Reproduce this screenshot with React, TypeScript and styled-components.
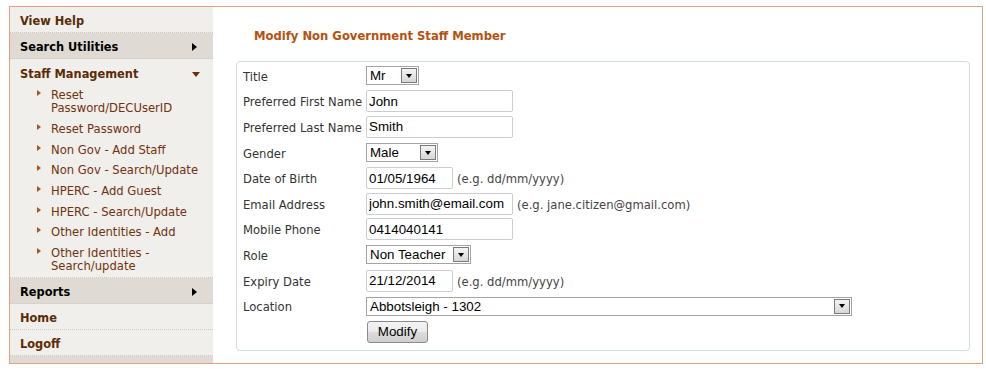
import React from 'react';
import styled, { createGlobalStyle } from 'styled-components';

const GlobalStyle = createGlobalStyle`
  html, body { margin: 0; padding: 0; background: #ffffff; }
  body { font-family: "DejaVu Sans", Verdana, sans-serif; }
  #root { display: block; }
`;

const Frame = styled.div`
  box-sizing: border-box;
  margin: 6px 0 0 9px;
  width: 974px;
  height: 358px;
  border: 1px solid #e0a27e;
  display: flex;
`;

const Sidebar = styled.nav`
  width: 203px;
  flex: none;
  background: #f1efeb;
  display: flex;
  flex-direction: column;
`;

const NavHeader = styled.div<{ $active?: boolean; $dark?: boolean; $open?: boolean }>`
  box-sizing: border-box;
  height: ${(p) => (p.$open ? '27px' : '26px')};
  flex: none;
  display: flex;
  align-items: center;
  justify-content: space-between;
  padding: 2px 0 0 10px;
  font-weight: bold;
  font-size: 11.4px;
  color: ${(p) => (p.$dark ? '#000000' : '#5a2c07')};
  background: ${(p) => (p.$active ? '#dfdbd4' : 'transparent')};
  border-bottom: ${(p) => (p.$open ? 'none' : '1px dotted #cdc8c0')};
`;

const RightArrow = styled.span`
  width: 0;
  height: 0;
  border-top: 4.5px solid transparent;
  border-bottom: 4.5px solid transparent;
  border-left: 5px solid #000000;
  margin-right: 16px;
`;

const DownArrow = styled.span`
  width: 0;
  height: 0;
  border-left: 4px solid transparent;
  border-right: 4px solid transparent;
  border-top: 5px solid #6e2d08;
  margin-right: 13px;
  margin-top: 1px;
`;

const NavList = styled.ul`
  list-style: none;
  margin: 0;
  padding: 0;
  height: 191px;
  overflow: hidden;
  flex: none;
  border-bottom: 1px dotted #cdc8c0;
`;

const NavItem = styled.li`
  display: flex;
  align-items: flex-start;
  padding: 3.3px 8px 4.4px 27px;
  font-size: 11.6px;
  line-height: 13px;
  color: #70320f;

  &::before {
    content: '';
    flex: none;
    width: 0;
    height: 0;
    margin: 1px 10px 0 0;
    border-top: 3.5px solid transparent;
    border-bottom: 3.5px solid transparent;
    border-left: 4px solid #a9561b;
  }
`;

const Filler = styled.div`
  flex: 1;
  background: #dfdbd4;
`;

const Main = styled.main`
  flex: 1;
  padding: 21px 12px 0 23px;
  background: #ffffff;
`;

const Title = styled.h1`
  margin: 0 0 17px 0;
  padding-left: 18px;
  font-size: 11.6px;
  line-height: 16px;
  font-weight: bold;
  color: #b5510f;
`;

const Panel = styled.div`
  border: 1px solid #d3dbe3;
  border-radius: 4px;
  padding: 1px 6px 5px 6px;
  display: grid;
  grid-template-columns: 123px 1fr;
  grid-auto-rows: 25.6px;
  align-items: center;
`;

const Label = styled.div`
  font-size: 11.6px;
  padding-top: 2px;
  color: #333333;
`;

const Field = styled.div`
  display: flex;
  align-items: center;
  gap: 4px;
`;

const TextInput = styled.input<{ $w: number }>`
  box-sizing: border-box;
  width: ${(p) => p.$w}px;
  height: 22px;
  margin: 0;
  padding: 0 2px;
  border: 1px solid #c9ced4;
  border-radius: 2px;
  font-family: "Liberation Sans", Arial, sans-serif;
  font-size: 13.33px;
  color: #000000;
  background: #ffffff;
  outline: none;
`;

const SelectBox = styled.div<{ $w: number }>`
  box-sizing: border-box;
  width: ${(p) => p.$w}px;
  height: 19px;
  border: 1px solid #a3a3a3;
  background: #ffffff;
  display: flex;
  align-items: center;
  justify-content: space-between;
  padding: 0 1px 0 3px;
  font-family: "Liberation Sans", Arial, sans-serif;
  font-size: 13.33px;
  color: #000000;
  white-space: nowrap;
`;

const DropButton = styled.span`
  box-sizing: border-box;
  flex: none;
  width: 16px;
  height: 15px;
  border: 1px solid #7a7a7a;
  background: linear-gradient(#f4f4f4, #e6e6e6 50%, #d6d6d6);
  display: flex;
  align-items: center;
  justify-content: center;

  &::after {
    content: '';
    width: 0;
    height: 0;
    border-left: 3.5px solid transparent;
    border-right: 3.5px solid transparent;
    border-top: 4px solid #000000;
  }
`;

const Hint = styled.span`
  font-size: 11.6px;
  padding-top: 2px;
  color: #444444;
`;

const Button = styled.button`
  box-sizing: border-box;
  margin: 0 0 0 1px;
  width: 61px;
  height: 22px;
  padding: 0;
  border: 1px solid #8a8a8a;
  border-radius: 3px;
  background: linear-gradient(#f3f3f3, #ebebeb 48%, #dcdcdc 52%, #cfcfcf);
  font-family: "Liberation Sans", Arial, sans-serif;
  font-size: 13.33px;
  color: #000000;
`;

const Select = ({ w, value }: { w: number; value: string }) => (
  <SelectBox $w={w}>
    <span>{value}</span>
    <DropButton />
  </SelectBox>
);

const subItems = [
  'Reset Password/DECUserID',
  'Reset Password',
  'Non Gov - Add Staff',
  'Non Gov - Search/Update',
  'HPERC - Add Guest',
  'HPERC - Search/Update',
  'Other Identities - Add',
  'Other Identities - Search/update',
];

export default function App() {
  return (
    <>
      <GlobalStyle />
      <Frame>
        <Sidebar>
          <NavHeader>View Help</NavHeader>
          <NavHeader $active $dark>
            Search Utilities
            <RightArrow />
          </NavHeader>
          <NavHeader $open>
            Staff Management
            <DownArrow />
          </NavHeader>
          <NavList>
            {subItems.map((s) => (
              <NavItem key={s}>
                <span>{s}</span>
              </NavItem>
            ))}
          </NavList>
          <NavHeader $active $dark>
            Reports
            <RightArrow />
          </NavHeader>
          <NavHeader>Home</NavHeader>
          <NavHeader>Logoff</NavHeader>
          <Filler />
        </Sidebar>
        <Main>
          <Title>Modify Non Government Staff Member</Title>
          <Panel>
            <Label>Title</Label>
            <Field>
              <Select w={53} value="Mr" />
            </Field>
            <Label>Preferred First Name</Label>
            <Field>
              <TextInput $w={147} defaultValue="John" />
            </Field>
            <Label>Preferred Last Name</Label>
            <Field>
              <TextInput $w={147} defaultValue="Smith" />
            </Field>
            <Label>Gender</Label>
            <Field>
              <Select w={72} value="Male" />
            </Field>
            <Label>Date of Birth</Label>
            <Field>
              <TextInput $w={87} defaultValue="01/05/1964" />
              <Hint>(e.g. dd/mm/yyyy)</Hint>
            </Field>
            <Label>Email Address</Label>
            <Field>
              <TextInput $w={147} defaultValue="john.smith@email.com" />
              <Hint>(e.g. jane.citizen@gmail.com)</Hint>
            </Field>
            <Label>Mobile Phone</Label>
            <Field>
              <TextInput $w={147} defaultValue="0414040141" />
            </Field>
            <Label>Role</Label>
            <Field>
              <Select w={105} value="Non Teacher" />
            </Field>
            <Label>Expiry Date</Label>
            <Field>
              <TextInput $w={87} defaultValue="21/12/2014" />
              <Hint>(e.g. dd/mm/yyyy)</Hint>
            </Field>
            <Label>Location</Label>
            <Field>
              <Select w={486} value="Abbotsleigh - 1302" />
            </Field>
            <div />
            <Field>
              <Button type="button">Modify</Button>
            </Field>
          </Panel>
        </Main>
      </Frame>
    </>
  );
}
